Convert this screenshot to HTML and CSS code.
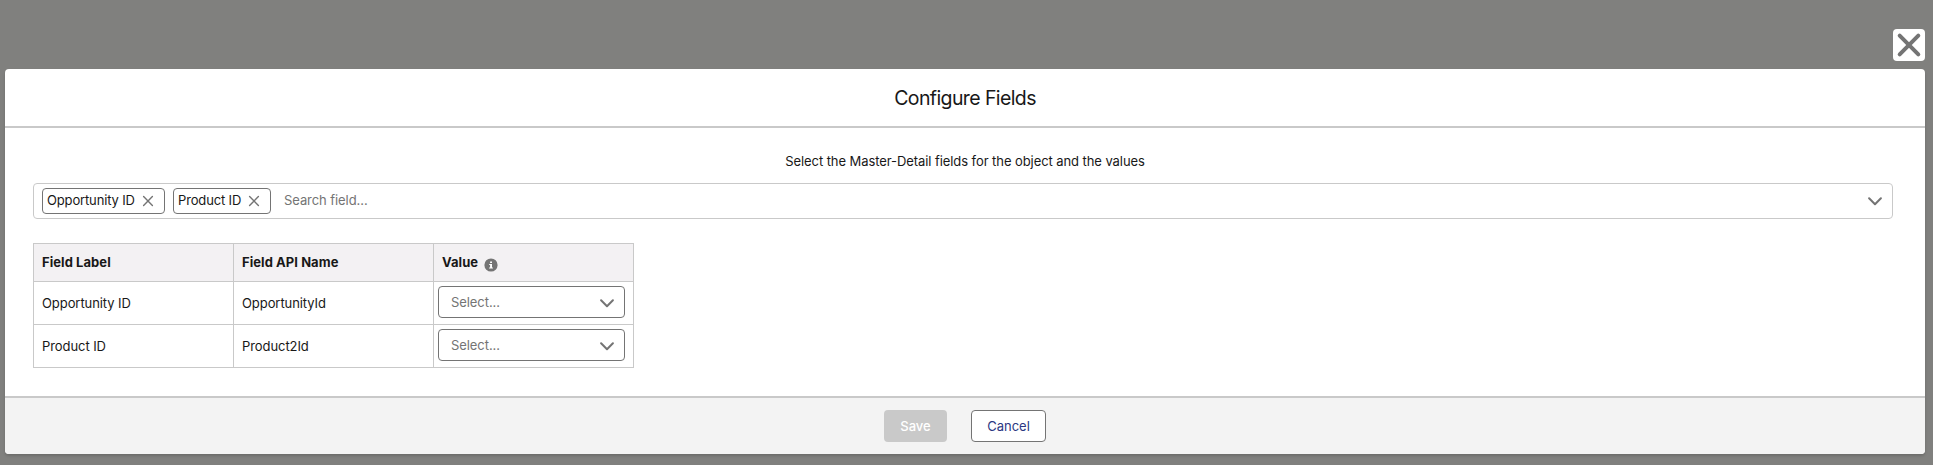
FILE: index.html
```html
<!DOCTYPE html>
<html lang="en">
<head>
<meta charset="utf-8">
<title>Configure Fields</title>
<link rel="stylesheet" href="styles.css">
</head>
<body>
<div class="backdrop">
  <button class="close" aria-label="Close"><svg width="32" height="32" viewBox="0 0 32 32"><path d="M6.7 6.7 25.3 25.3M25.3 6.7 6.7 25.3"/></svg></button>
  <section class="modal">
    <header class="modal-header"><h2 class="title">Configure Fields</h2></header>
    <div class="modal-body">
      <p class="hint">Select the Master-Detail fields for the object and the values</p>
      <div class="combo">
        <span class="pill pill-wide"><span class="pill-text">Opportunity ID</span><svg width="12" height="12" viewBox="0 0 12 12"><path d="M1.6 1.6 10.4 10.4M10.4 1.6 1.6 10.4"/></svg></span>
        <span class="pill"><span class="pill-text">Product ID</span><svg width="12" height="12" viewBox="0 0 12 12"><path d="M1.6 1.6 10.4 10.4M10.4 1.6 1.6 10.4"/></svg></span>
        <span class="placeholder">Search field...</span>
        <svg class="chevron" width="14" height="9" viewBox="0 0 14 9"><path d="M1.1 1.3 7 7.2 12.9 1.3"/></svg>
      </div>
      <div class="table">
        <div class="row head">
          <div class="cell">Field Label</div>
          <div class="cell">Field API Name</div>
          <div class="cell value-head"><span>Value</span><svg class="info" width="14" height="14" viewBox="0 0 14 14"><circle cx="7" cy="7" r="6.6"/><path d="M6.1 3.5h1.9v1.6H6.1zM5.2 5.9h2.8v3.5h.9v1.1H5.1V9.4h1V7h-.9z"/></svg></div>
        </div>
        <div class="row">
          <div class="cell">Opportunity ID</div>
          <div class="cell">OpportunityId</div>
          <div class="cell pick"><div class="select"><span>Select...</span><svg class="chevron" width="14" height="9" viewBox="0 0 14 9"><path d="M1.1 1.3 7 7.2 12.9 1.3"/></svg></div></div>
        </div>
        <div class="row">
          <div class="cell">Product ID</div>
          <div class="cell">Product2Id</div>
          <div class="cell pick"><div class="select"><span>Select...</span><svg class="chevron" width="14" height="9" viewBox="0 0 14 9"><path d="M1.1 1.3 7 7.2 12.9 1.3"/></svg></div></div>
        </div>
      </div>
    </div>
    <footer class="modal-footer">
      <button class="btn save">Save</button>
      <button class="btn cancel">Cancel</button>
    </footer>
  </section>
</div>
</body>
</html>
```

FILE: styles.css
```css
* { box-sizing: border-box; }
body { margin: 0; font: 13px/20px Inter, "Liberation Sans", sans-serif; letter-spacing: -.075px; color: #181818; }
svg { display: block; flex: none; fill: none; stroke: #747474; }
.backdrop { height: 465px; padding: 29px 8px 11px 5px; background: #80807e; display: flex; flex-direction: column; align-items: flex-end; gap: 8px; overflow: hidden; }
.close { width: 32px; height: 32px; padding: 0; border: 0; border-radius: 4px; background: #fff; }
.close svg { stroke-width: 4; stroke-linecap: round; }
.modal { width: 100%; height: 385px; display: flex; flex-direction: column; background: #fff; border-radius: 4px; overflow: hidden; box-shadow: 0 2px 3px rgba(0, 0, 0, .16); }
.modal-header { height: 59px; border-bottom: 2px solid #c9c9c9; padding-top: 2px; display: flex; align-items: center; justify-content: center; }
.title { margin: 0; font-size: 19.5px; line-height: 25px; font-weight: 400; letter-spacing: -.6px; }
.modal-body { flex: 1; padding: 23px 32px 0 28px; display: flex; flex-direction: column; }
.hint { margin: 0 0 12px; text-align: center; padding-left: 4px; }
.combo { height: 36px; border: 1px solid #c9c9c9; border-radius: 4px; padding: 0 10px 0 8px; display: flex; align-items: center; gap: 8px; }
.pill { width: 98px; height: 26px; border: 1px solid #747474; border-radius: 4px; padding: 0 10px 0 4px; display: flex; align-items: center; justify-content: space-between; }
.pill-wide { width: 123px; }
.pill-text { padding-bottom: 2px; letter-spacing: -.15px; }
.pill svg { stroke-width: 1.4; stroke-linecap: round; }
.placeholder { flex: 1; padding: 0 0 2px 5px; color: #747474; }
.chevron { stroke-width: 2; stroke-linecap: round; stroke-linejoin: round; }
.table { margin-top: 24px; width: 601px; border: 1px solid #c9c9c9; }
.row { height: 43px; display: grid; grid-template-columns: 199px 200px 200px; border-top: 1px solid #c9c9c9; }
.head { height: 37px; border-top: 0; background: #f3f1f3; font-weight: 700; letter-spacing: .06px; }
.cell { display: flex; align-items: center; padding-left: 8px; border-left: 1px solid #c9c9c9; }
.cell:first-child { border-left: 0; }
.head .cell { padding-bottom: 1px; }
.head .value-head { gap: 6px; padding-bottom: 2px; }
.info { margin-top: 7px; }
.info circle { fill: #747474; stroke: none; }
.info path { fill: #fff; stroke: none; }
.pick { padding: 4px 8px 6px 4px; }
.select { width: 187px; height: 32px; border: 1px solid #747474; border-radius: 4px; padding: 0 10px 0 12px; display: flex; align-items: center; justify-content: space-between; color: #747474; }
.select .chevron { margin-top: 3px; }
.modal-footer { height: 58px; border-top: 2px solid #c9c9c9; background: #f3f3f3; display: flex; align-items: center; justify-content: center; gap: 24px; }
.btn { height: 32px; padding: 0; border-radius: 4px; font: inherit; }
.save { width: 63px; border: 0; background: #c9c9c9; color: #fff; font-weight: 500; }
.cancel { width: 75px; border: 1px solid #747474; background: #fff; color: #2c3782; }
```
